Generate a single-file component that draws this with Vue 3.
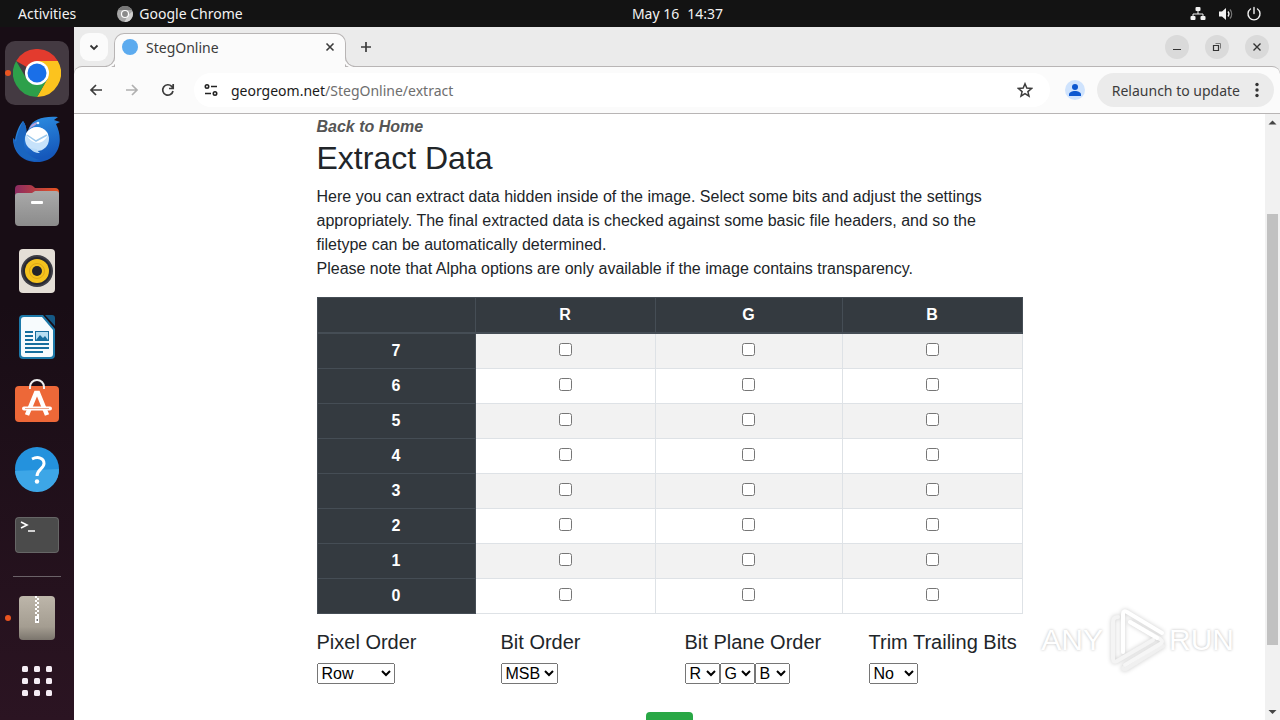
<script setup>
import { ref } from "vue";

const channels = ["R", "G", "B"];
const bits = [7, 6, 5, 4, 3, 2, 1, 0];

const selected = ref([]);
const pixelOrder = ref("Row");
const bitOrder = ref("MSB");
const planes = ref(["R", "G", "B"]);
const trim = ref("No");
const address = ref("");
</script>

<template>
  <div class="desktop">
    <!-- System bar -->
    <header class="topbar">
      <div class="topbar-left">
        <span>Activities</span>
        <span class="app-name">
          <svg width="16" height="16" viewBox="0 0 16 16">
            <circle cx="8" cy="8" r="8" fill="#a5a5a5" />
            <path d="M1 4a8 8 0 0 1 14 0H8z" fill="#777" />
            <path d="M15.5 5.500a8 8 0 0 1-8 10.500L11 9z" fill="#d0d0d0" />
            <circle cx="8" cy="8" r="3.500" fill="#8a8a8a" stroke="#fff" stroke-width="1.200" />
          </svg>
          Google Chrome
        </span>
      </div>
      <div class="clock"><span>May 16</span><span>14:37</span></div>
      <div class="topbar-right">
        <svg width="16" height="16" viewBox="0 0 16 16" fill="#f2f2f2">
          <rect x="5.500" y="1" width="5" height="4" rx="1" />
          <rect x="0.500" y="10" width="5" height="4" rx="1" />
          <rect x="10.500" y="10" width="5" height="4" rx="1" />
          <path d="M8 5v3M3 10V8h10v2" fill="none" stroke="#f2f2f2" />
        </svg>
        <svg width="16" height="16" viewBox="0 0 16 16">
          <path d="M1 5.500h3L8 2v12L4 10.500H1z" fill="#f2f2f2" />
          <path d="M10 5.500a4 4 0 0 1 0 5" fill="none" stroke="#f2f2f2" stroke-width="1.300" />
          <path d="M12 3.500a7 7 0 0 1 0 9" fill="none" stroke="#777" stroke-width="1.300" />
        </svg>
        <svg width="16" height="16" viewBox="0 0 16 16" fill="none" stroke="#f2f2f2" stroke-width="1.400" stroke-linecap="round">
          <path d="M4.500 3a6 6 0 1 0 7 0M8 1.500v6" />
        </svg>
      </div>
    </header>

    <div class="workspace">
      <!-- Dock -->
      <nav class="dock">
        <button class="dock-item active running" aria-label="Google Chrome">
          <svg width="48" height="48" viewBox="0 0 48 48">
            <path d="M24 24 3.200 12A24 24 0 0 1 44.800 12z" fill="#e33b2e" />
            <path d="M24 12H44.800A24 24 0 0 1 24 48L34.400 30z" fill="#fcc31e" />
            <path d="M3.200 12A24 24 0 0 0 24 48L34.400 30 24 24 13.600 30z" fill="#2da04a" />
            <circle cx="24" cy="24" r="12" fill="#fff" />
            <circle cx="24" cy="24" r="9.500" fill="#1a6fe8" />
          </svg>
        </button>
        <button class="dock-item" aria-label="Thunderbird">
          <svg width="48" height="48" viewBox="0 0 48 48">
            <defs>
              <linearGradient id="bird" x1="0" y1="0" x2="0.300" y2="1">
                <stop offset="0" stop-color="#2f93e6" />
                <stop offset="1" stop-color="#1558bb" />
              </linearGradient>
            </defs>
            <path d="M16 13C20 4 30 1 45 2l-4 3 6 2-4 2c8 16 4 37-19 38C9 47 0 37 0 23l2 2C3 18 6 10 10 6c3 4 4 9 3 13z" fill="url(#bird)" />
            <path d="M12 21C8 32 14 42 27 45 12 49 1 37 0 23l3 4C4 19 7 12 10 6c3 4 4 9 3 13z" fill="#1a66c0" />
            <path d="M16 14c2-5 6-7 10-7-3 2-4 4-7 5z" fill="#b5a0d8" />
            <circle cx="25" cy="8" r="1.300" fill="#dff2ff" />
            <circle cx="24" cy="24" r="12" fill="#c6e2fa" />
            <path d="M13 19c5 10 16 13 22 1-1-4-6-8-11-8-5 0-9 3-11 7z" fill="#fff" />
            <path d="m14 20 9 6 11-6" fill="none" stroke="#9cc9ec" stroke-width="1.500" />
            <path d="M17 33c2 3 5 5 10 5-2-1-3-3-3-4z" fill="#b9dbf8" />
          </svg>
        </button>
        <button class="dock-item" aria-label="Files">
          <svg width="48" height="48" viewBox="0 0 48 48">
            <defs>
              <linearGradient id="tabs"><stop offset="0" stop-color="#8b2b62" /><stop offset="1" stop-color="#e95420" /></linearGradient>
              <linearGradient id="folder" x1="0" y1="0" x2="0" y2="1"><stop offset="0" stop-color="#aaa" /><stop offset="1" stop-color="#8b8b8b" /></linearGradient>
            </defs>
            <path d="M2 8q0-4 4-4h11q2 0 4 2l1 1h20q4 0 4 4v8H2z" fill="url(#tabs)" />
            <path d="M2 15q0-3 3-3h14l3-2h21q3 0 3 3v28q0 4-4 4H6q-4 0-4-4z" fill="url(#folder)" />
            <rect x="18" y="20" width="12" height="3" rx="1" fill="#fff" />
          </svg>
        </button>
        <button class="dock-item" aria-label="Rhythmbox">
          <svg width="48" height="48" viewBox="0 0 48 48">
            <rect x="6" y="2" width="36" height="44" rx="4" fill="#e4ded6" />
            <circle cx="24" cy="24" r="16" fill="#3d3d45" />
            <circle cx="24" cy="24" r="14" fill="#282830" />
            <circle cx="24" cy="24" r="12" fill="#f5c21d" />
            <circle cx="24" cy="24" r="7.500" fill="none" stroke="#e0a816" />
            <circle cx="24" cy="24" r="5" fill="#24242a" />
          </svg>
        </button>
        <button class="dock-item" aria-label="LibreOffice Writer">
          <svg width="48" height="48" viewBox="0 0 48 48">
            <path d="M10 2h20l12 14v26q0 4-4 4H10q-4 0-4-4V6q0-4 4-4z" fill="#1d79a9" />
            <path d="M32 2h7q3 0 3 3v8z" fill="#155985" />
            <path d="M11 4h18l11 13v24q0 3-3 3H11q-3 0-3-3V7q0-3 3-3z" fill="#f7fbfd" />
            <path d="M12 19h8M12 23h8M12 27h8M12 31h24M12 35h24M12 39h18" stroke="#176f9e" stroke-width="2" />
            <rect x="22.500" y="18.500" width="13" height="9" fill="#b7dff2" stroke="#176f9e" />
            <path d="m23 27 4-5 3 3 2-2 3 4z" fill="#176f9e" />
          </svg>
        </button>
        <button class="dock-item" aria-label="Ubuntu Software">
          <svg width="48" height="48" viewBox="0 0 48 48">
            <rect x="2" y="7" width="44" height="36" rx="4" fill="#ed6838" />
            <path d="M17 10V8a7 7 0 0 1 14 0v2" fill="none" stroke="#eee" stroke-width="2" />
            <path d="m14 36 9-22h2l9 22" fill="none" stroke="#fff" stroke-width="4.500" />
            <path d="M11 29.500h26" stroke="#fff" stroke-width="4" stroke-linecap="round" />
            <path d="M12 29.500h24" stroke="#eba98f" stroke-width="1" />
          </svg>
        </button>
        <button class="dock-item" aria-label="Help">
          <svg width="48" height="48" viewBox="0 0 48 48">
            <circle cx="24" cy="24" r="22" fill="#2492dd" />
            <path d="M2 26a22 22 0 0 0 44-2z" fill="#3da6e7" />
            <path d="M19 14c6-3 12-1 12 4.500 0 5-7 6-7 12.500" fill="none" stroke="#fff" stroke-width="3" />
            <circle cx="24" cy="36.500" r="2.200" fill="#fff" />
          </svg>
        </button>
        <button class="dock-item" aria-label="Terminal">
          <svg width="48" height="48" viewBox="0 0 48 48">
            <rect x="2" y="6" width="44" height="36" rx="4" fill="#666" />
            <rect x="3" y="7" width="42" height="34" rx="3" fill="#4b4b4b" />
            <path d="m8 11 6 3-6 3M15 20h7" fill="none" stroke="#fff" stroke-width="1.600" />
          </svg>
        </button>
        <hr class="dock-line" />
        <button class="dock-item running" aria-label="Archive Manager">
          <svg width="48" height="48" viewBox="0 0 48 48">
            <defs>
              <linearGradient id="zip" x1="0" y1="0" x2="0" y2="1"><stop offset="0" stop-color="#bdb6aa" /><stop offset="0.700" stop-color="#a49d91" /><stop offset="1" stop-color="#7b756d" /></linearGradient>
            </defs>
            <rect x="6" y="2" width="36" height="44" rx="4" fill="url(#zip)" />
            <path d="M23 2v20" stroke="#fff" stroke-width="2" stroke-dasharray="2 2" />
            <path d="M25 4v20" stroke="#fff" stroke-width="2" stroke-dasharray="2 2" />
            <path d="M22 22h4v7h-4z" fill="#fff" />
            <path d="M23.500 25h1.500v2h-1.500z" fill="#777" />
          </svg>
        </button>
        <button class="dock-item apps" aria-label="Show Applications">
          <svg width="30" height="30" viewBox="0 0 30 30" fill="#f5edf4">
            <template v-for="row in 3" :key="row">
              <rect v-for="col in 3" :key="col" :x="col * 12 - 12" :y="row * 12 - 12" width="6" height="6" rx="1.500" />
            </template>
          </svg>
        </button>
      </nav>

      <!-- Browser -->
      <div class="browser">
        <div class="tabstrip">
          <button class="tab-search" aria-label="Search tabs">
            <svg width="10" height="10" viewBox="0 0 10 10" fill="none" stroke="#333" stroke-width="1.800"><path d="m1.500 3.500 3.500 3.500 3.500-3.500" /></svg>
          </button>
          <div class="tab">
            <span class="favicon"></span>
            <span class="tab-title">StegOnline</span>
            <button class="icon-btn" aria-label="Close tab">
              <svg width="16" height="16" viewBox="0 0 16 16" stroke="#3c3c3c" stroke-width="1.600"><path d="m4.500 4.500 7 7M11.500 4.500l-7 7" /></svg>
            </button>
          </div>
          <button class="icon-btn new-tab" aria-label="New tab">
            <svg width="16" height="16" viewBox="0 0 16 16" stroke="#3c3c3c" stroke-width="1.700"><path d="M8 3v10M3 8h10" /></svg>
          </button>
          <div class="window-controls">
            <button aria-label="Minimize"><svg width="10" height="10" viewBox="0 0 10 10" stroke="#333"><path d="M1 7.500h8" /></svg></button>
            <button aria-label="Restore"><svg width="10" height="10" viewBox="0 0 10 10" fill="none" stroke="#333"><path d="M1.500 3.500h5v5h-5z" stroke-width="1.200" /><path d="M3.500 1.500h5v5" stroke="#777" /></svg></button>
            <button aria-label="Close"><svg width="10" height="10" viewBox="0 0 10 10" stroke="#333" stroke-width="1.400"><path d="m1.500 1.500 7 7M8.500 1.500l-7 7" /></svg></button>
          </div>
        </div>

        <div class="toolbar">
          <div class="nav-buttons">
            <button class="icon-btn" aria-label="Back">
              <svg width="16" height="16" viewBox="0 0 16 16" fill="none" stroke="#3c3c3c" stroke-width="1.700"><path d="M14 8H3M8 3 3 8l5 5" /></svg>
            </button>
            <button class="icon-btn" aria-label="Forward">
              <svg width="16" height="16" viewBox="0 0 16 16" fill="none" stroke="#b0b0b0" stroke-width="1.700"><path d="M2 8h11M8 3l5 5-5 5" /></svg>
            </button>
            <button class="icon-btn" aria-label="Reload">
              <svg width="16" height="16" viewBox="0 0 16 16" fill="none" stroke="#3c3c3c" stroke-width="1.700"><path d="M13 9a5.200 5.200 0 1 1-1.300-4.600L13 6M13.200 2v4.500H9" /></svg>
            </button>
          </div>
          <div class="omnibox">
            <svg class="site-info" width="16" height="16" viewBox="0 0 16 16" fill="none" stroke="#222" stroke-width="1.600">
              <circle cx="4" cy="4.500" r="1.700" /><path d="M8 4.500h6M2 11.500h6" /><circle cx="12" cy="11.500" r="1.700" />
            </svg>
            <label class="address">
              <span class="host">georgeom.net</span>/StegOnline/extract
              <input v-model="address" class="address-input" type="text" aria-label="Address" />
            </label>
            <button class="icon-btn" aria-label="Bookmark this page">
              <svg width="16" height="16" viewBox="0 0 16 16" fill="none" stroke="#3c3c3c" stroke-width="1.500"><path d="m8 1.800 1.800 4.300 4.700.4-3.600 3.100 1.100 4.600L8 11.700l-4 2.500 1.100-4.600-3.600-3.100 4.700-.4z" /></svg>
            </button>
          </div>
          <button class="icon-btn" aria-label="Profile">
            <svg width="20" height="20" viewBox="0 0 20 20"><circle cx="10" cy="10" r="10" fill="#cfe3fd" /><circle cx="10" cy="7" r="3" fill="#0b57d0" /><path d="M4 16v-1.500c0-2 3-3.500 6-3.500s6 1.500 6 3.500V16z" fill="#0b57d0" /></svg>
          </button>
          <button class="relaunch">
            Relaunch to update
            <svg width="4" height="16" viewBox="0 0 4 16" fill="#333"><circle cx="2" cy="2.500" r="1.700" /><circle cx="2" cy="8" r="1.700" /><circle cx="2" cy="13.500" r="1.700" /></svg>
          </button>
        </div>

        <div class="viewport">
          <main class="page">
            <div class="content">
              <a class="back" href="#">Back to Home</a>
              <h1>Extract Data</h1>
              <p>
                Here you can extract data hidden inside of the image. Select some bits and adjust the settings
                appropriately. The final extracted data is checked against some basic file headers, and so the
                filetype can be automatically determined.<br />
                Please note that Alpha options are only available if the image contains transparency.
              </p>

              <table>
                <thead>
                  <tr>
                    <th class="bit"></th>
                    <th v-for="c in channels" :key="c" :class="'channel-' + c">{{ c }}</th>
                  </tr>
                </thead>
                <tbody>
                  <tr v-for="bit in bits" :key="bit">
                    <th>{{ bit }}</th>
                    <td v-for="c in channels" :key="c">
                      <input v-model="selected" type="checkbox" :value="c + bit" :aria-label="c + bit" />
                    </td>
                  </tr>
                </tbody>
              </table>

              <div class="options">
                <div>
                  <label for="pixel-order">Pixel Order</label>
                  <select id="pixel-order" v-model="pixelOrder">
                    <option>Row</option>
                    <option>Column</option>
                  </select>
                </div>
                <div>
                  <label for="bit-order">Bit Order</label>
                  <select id="bit-order" v-model="bitOrder">
                    <option>MSB</option>
                    <option>LSB</option>
                  </select>
                </div>
                <div>
                  <label for="plane-0">Bit Plane Order</label>
                  <div class="planes">
                    <select v-for="(p, i) in planes" :id="'plane-' + i" :key="i" v-model="planes[i]" :aria-label="'Bit Plane ' + (i + 1)">
                      <option v-for="c in channels" :key="c">{{ c }}</option>
                    </select>
                  </div>
                </div>
                <div>
                  <label for="trim">Trim Trailing Bits</label>
                  <select id="trim" v-model="trim">
                    <option>No</option>
                    <option>Yes</option>
                  </select>
                </div>
              </div>
              <button class="go" aria-label="Go"></button>
            </div>
          </main>
          <div class="scrollbar">
            <svg width="15" height="16" viewBox="0 0 15 16"><path d="M3.500 10.500h8l-4-4z" fill="#444" /></svg>
            <div class="track"><div class="thumb"></div></div>
            <svg width="15" height="16" viewBox="0 0 15 16"><path d="M3.500 6h8l-4 4z" fill="#444" /></svg>
          </div>
        </div>
      </div>
    </div>

    <!-- Watermark -->
    <div class="watermark">
      <span>ANY</span>
      <svg width="58" height="64" viewBox="0 0 58 64" fill="none" stroke="#fff" stroke-width="4" stroke-linejoin="round" stroke-linecap="round">
        <path d="M16 60q0 2 3 1l37-23" stroke="#f0f0f0" />
        <path d="M11 9q-5 0-5 5v37q0 4 4 2l36-21" stroke="#f4f4f4" />
        <path d="M16 44V6q0-4 4-2l35 21" />
        <path d="m23 14 30 17q4 3 0 5L18 57" stroke="#f6f6f6" />
        <path d="m23 14 27 16" />
      </svg>
      <span>RUN</span>
    </div>
  </div>
</template>

<style>
body {
  margin: 0;
  overflow: hidden;
}
</style>

<style scoped>
.desktop {
  position: relative;
  display: flex;
  flex-direction: column;
  height: 100vh;
  font-family: "Noto Sans", "Open Sans", sans-serif;
  font-size: 14px;
  background: #1b0f17;
}

.desktop *,
.desktop *::before,
.desktop *::after {
  box-sizing: border-box;
}

svg {
  display: block;
  flex-shrink: 0;
}

button {
  display: flex;
  align-items: center;
  justify-content: center;
  padding: 0;
  border: none;
  background: none;
  font: inherit;
}

/* System bar */
.topbar {
  display: grid;
  grid-template-columns: 1fr auto 1fr;
  align-items: center;
  height: 27px;
  padding: 0 18px;
  background: #131313;
  color: #f2f2f2;
}

.topbar-left,
.topbar-right {
  display: flex;
  align-items: center;
}

.topbar-left {
  gap: 41px;
}

.app-name {
  display: flex;
  align-items: center;
  gap: 6px;
}

.clock {
  display: flex;
  gap: 8px;
  padding-left: 75px;
}

.topbar-right {
  justify-content: flex-end;
  gap: 12px;
}

.workspace {
  display: flex;
  flex: 1;
  min-height: 0;
}

/* Dock */
.dock {
  display: flex;
  flex-direction: column;
  align-items: center;
  gap: 2px;
  width: 74px;
  flex-shrink: 0;
  padding-top: 14px;
  overflow: hidden;
  background: linear-gradient(#180d15 40%, #2b1422);
}

.dock-item {
  position: relative;
  width: 64px;
  height: 64px;
  flex-shrink: 0;
  border-radius: 10px;
}

.dock-item.active {
  background: #443a42;
}

.dock-item.running::before {
  content: "";
  position: absolute;
  left: 0;
  top: 29px;
  width: 6px;
  height: 6px;
  border-radius: 50%;
  background: #e95420;
}

.dock-item.apps {
  height: 58px;
}

.dock-line {
  width: 48px;
  height: 1px;
  margin: 7px 0;
  border: none;
  flex-shrink: 0;
  background: #6b6268;
}

/* Browser */
.browser {
  display: flex;
  flex-direction: column;
  flex: 1;
  min-width: 0;
  color: #3c3c3c;
  background: #ebebeb;
}

.tabstrip {
  display: flex;
  height: 39px;
  padding: 6px 11px 0 6px;
}

.tab-search {
  width: 28px;
  height: 28px;
  border-radius: 9px;
  background: #fbfbfb;
}

.tab {
  position: relative;
  z-index: 1;
  display: flex;
  align-items: center;
  width: 232px;
  height: 34px;
  margin-left: 6px;
  padding: 0 7px 7px;
  border: 1px solid #b8b5b5;
  border-bottom: none;
  border-radius: 10px 10px 0 0;
  background: #fbfbfb;
}

.tab::before,
.tab::after {
  content: "";
  position: absolute;
  bottom: 0;
  width: 10px;
  height: 10px;
  border-bottom: 1px solid #b8b5b5;
}

.tab::before {
  left: -10px;
  border-right: 1px solid #b8b5b5;
  border-bottom-right-radius: 10px;
  box-shadow: 2px 1px 0 #fbfbfb;
}

.tab::after {
  right: -10px;
  border-left: 1px solid #b8b5b5;
  border-bottom-left-radius: 10px;
  box-shadow: -2px 1px 0 #fbfbfb;
}

.favicon {
  width: 16px;
  height: 16px;
  border-radius: 50%;
  background: #5cabef;
}

.tab-title {
  flex: 1;
  margin-left: 8px;
}

.new-tab {
  height: 28px;
  margin-left: 12px;
}

.window-controls {
  display: flex;
  gap: 16px;
  height: 28px;
  align-items: center;
  margin-left: auto;
}

.window-controls button {
  width: 24px;
  height: 24px;
  border-radius: 50%;
  background: #dadada;
}

.toolbar {
  display: flex;
  align-items: center;
  height: 48px;
  padding-right: 6px;
  border: solid #b8b5b5;
  border-width: 1px 0;
  border-radius: 8px 8px 0 0;
  background: #fbfbfb;
}

.nav-buttons {
  display: flex;
  gap: 20px;
  padding: 0 18px 0 14px;
}

.omnibox {
  display: flex;
  align-items: center;
  flex: 1;
  height: 34px;
  margin-right: 15px;
  padding: 0 17px 0 9px;
  border-radius: 17px;
  background: #fff;
}

.address {
  display: flex;
  flex: 1;
  align-items: center;
  margin-left: 12px;
  color: #6e6e6e;
}

.host {
  color: #1a1a1a;
}

.address-input {
  flex: 1;
  min-width: 0;
  padding: 0;
  border: none;
  outline: none;
  background: none;
  font: inherit;
}

.relaunch {
  gap: 15px;
  height: 34px;
  margin-left: 12px;
  padding: 0 15px;
  border-radius: 17px;
  background: #ebebeb;
  color: #3c3c3c;
}

/* Web page */
.viewport {
  display: flex;
  flex: 1;
  min-height: 0;
  background: #fff;
}

.page {
  flex: 1;
  min-width: 0;
  overflow: hidden;
  color: #212529;
  font: 16px/24px "Liberation Sans", Arial, sans-serif;
}

.content {
  max-width: 706px;
  margin: 0 auto;
  padding-top: 1px;
}

.back {
  display: block;
  color: #555;
  font-weight: bold;
  font-style: italic;
  text-decoration: none;
}

h1 {
  margin: 0 0 8px;
  font-size: 32px;
  line-height: 38px;
  font-weight: 500;
}

p {
  margin: 0 0 16px;
}

table {
  width: 100%;
  margin-bottom: 16px;
  border-collapse: collapse;
  table-layout: fixed;
  text-align: center;
}

th,
td {
  height: 35px;
  padding: 5px;
  border: 1px solid #dee2e6;
  vertical-align: top;
}

th {
  color: #fff;
  background: #343a40;
  border-color: #454d55;
}

thead th {
  border-bottom-width: 2px;
}

.bit {
  width: 158px;
}

.channel-G {
  width: 187px;
}

tbody tr:nth-of-type(odd) {
  background: #f2f2f2;
}

td input {
  display: block;
  width: 13px;
  height: 13px;
  margin: 4px auto 0;
}

.options {
  display: grid;
  grid-template-columns: repeat(4, 1fr);
  column-gap: 30px;
  white-space: nowrap;
}

.options label {
  display: block;
  margin-bottom: 9px;
  font-size: 20px;
}

.options select {
  display: block;
  margin: 0;
  font: 16px "Liberation Sans", Arial, sans-serif;
}

.planes {
  display: flex;
}

.go {
  width: 47px;
  height: 38px;
  margin: 28px auto 0;
  border-radius: 4px;
  background: #28a745;
}

.scrollbar {
  display: flex;
  flex-direction: column;
  width: 15px;
  background: #f1f1f1;
}

.track {
  flex: 1;
  padding: 0 2px;
}

.thumb {
  height: 75%;
  margin-top: 84px;
  background: #c1c1c1;
}

.watermark {
  position: absolute;
  right: 46px;
  bottom: 48px;
  display: flex;
  align-items: center;
  gap: 4px;
  color: #fff;
  font: 30px "Liberation Sans", Arial, sans-serif;
  text-shadow: 0 0 3px #bbb;
  pointer-events: none;
}

.watermark svg {
  filter: drop-shadow(0 0 2px #ccc);
}
</style>
